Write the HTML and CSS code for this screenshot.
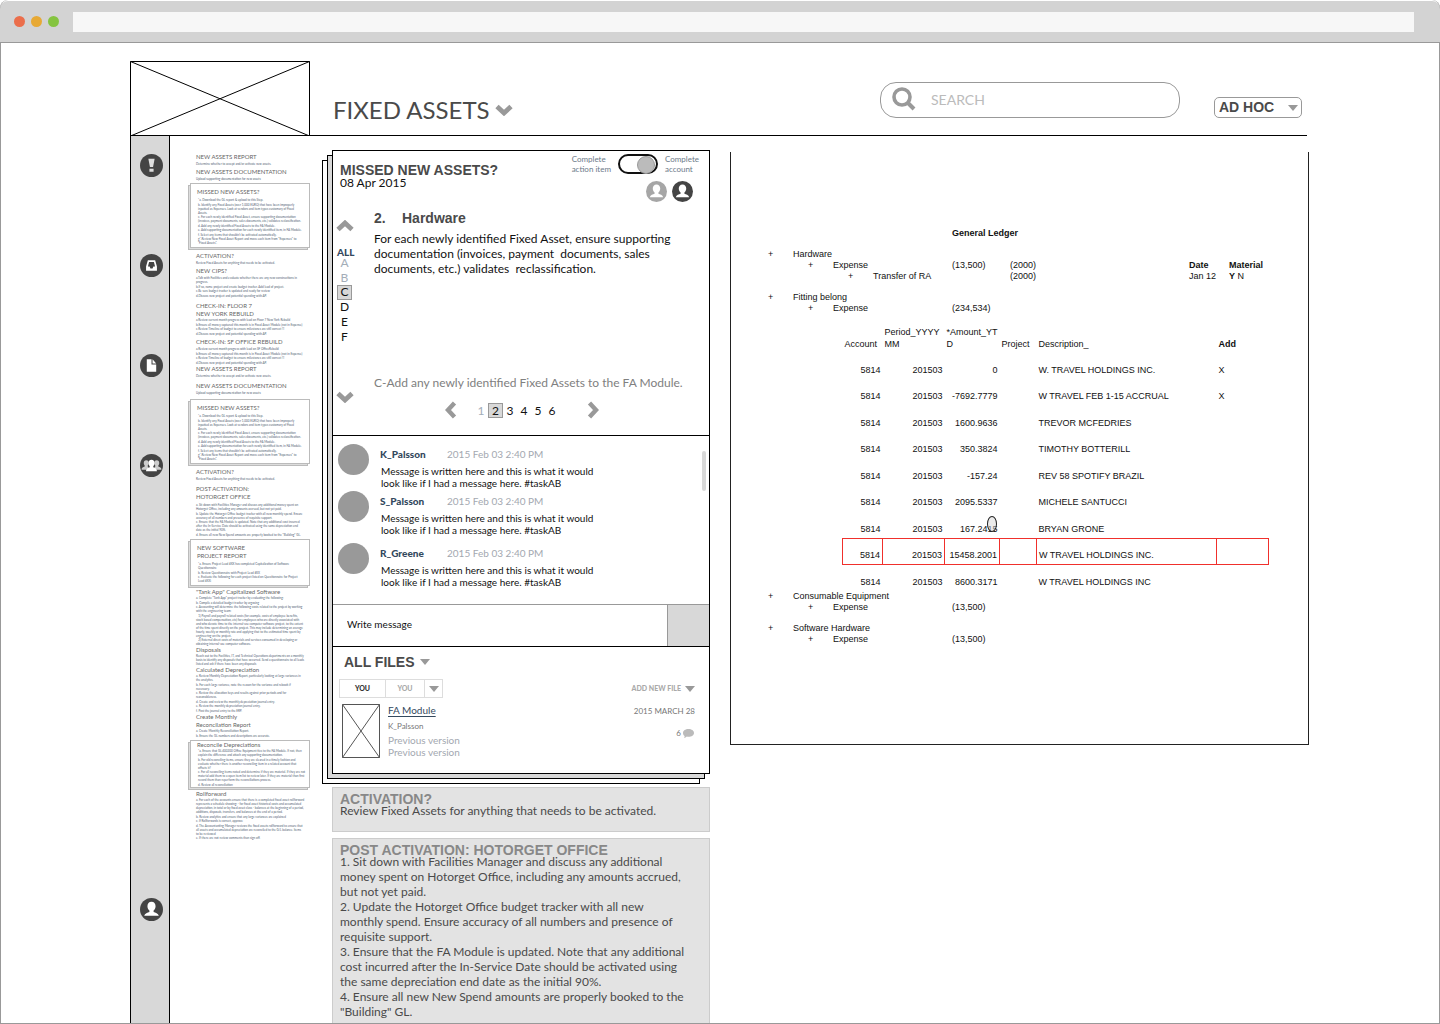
FILE: index.html
```html
<!DOCTYPE html>
<html lang="en">
<head>
<meta charset="utf-8">
<meta name="viewport" content="width=device-width, initial-scale=1">
<title>Fixed Assets</title>
<link rel="stylesheet" href="styles.css">
</head>
<body>
<svg class="sprite" aria-hidden="true">
  <symbol id="chevron" viewBox="0 0 18 12"><path d="M2 2.500l7 6.500 7-6.500" fill="none" stroke="#999" stroke-width="4.800"/></symbol>
  <symbol id="caret" viewBox="0 0 10 6"><path d="M0 0h10L5 6z" fill="#999"/></symbol>
  <symbol id="person" viewBox="0 0 22 22"><circle cx="11" cy="11" r="11" fill="currentColor"/><path d="M11 3.6c2.500 0 3.900 1.800 3.900 4.200 0 1.800-.8 3.300-1.900 4.200v1.400c1.700.7 4.400 1.200 5 3.600H4c.6-2.400 3.300-2.900 5-3.600V12c-1.100-.9-1.900-2.400-1.900-4.200 0-2.400 1.400-4.200 3.900-4.200z" fill="#fff"/></symbol>
</svg>
<div class="window">
  <div class="chrome">
    <span class="dot dot-red"></span><span class="dot dot-amber"></span><span class="dot dot-green"></span>
    <input class="address" type="text" aria-label="Address">
  </div>
  <div class="page">
    <header class="header">
      <svg class="logo" viewBox="0 0 180 75" preserveAspectRatio="none" role="img" aria-label="Logo"><path d="M.5.5h179v74.500H.5zM.5.5l179 74.500M179.500.5L.5 75" fill="none" stroke="#000"/></svg>
      <h1 class="page-title">FIXED ASSETS <button class="icon-button" aria-label="Choose account"><svg class="chevron"><use href="#chevron"/></svg></button></h1>
      <label class="search">
        <svg class="search-icon" viewBox="0 0 24 24" aria-hidden="true"><circle cx="10" cy="10" r="8" fill="none" stroke="#999" stroke-width="3.600"/><path d="M15.500 15.500l6.500 6.500" stroke="#999" stroke-width="4"/></svg>
        <input type="search" placeholder="SEARCH" aria-label="Search">
      </label>
      <div class="filter">
        <select aria-label="Filter"><option>AD HOC</option></select>
        <svg class="caret"><use href="#caret"/></svg>
      </div>
    </header>

    <div class="workspace">
      <nav class="rail" aria-label="Sections">
        <a href="#alerts" aria-label="Alerts"><svg viewBox="0 0 22 22"><circle cx="11" cy="11" r="11" fill="#444"/><path d="M8 4.500h6l-1.500 8h-3zM9 14h4v3H9z" fill="#ddd"/></svg></a>
        <a href="#inbox" aria-label="Inbox"><svg viewBox="0 0 22 22"><circle cx="11" cy="11" r="11" fill="#444"/><path fill-rule="evenodd" d="M7.500 6h7l1.700 6v4H5.800v-4zM8.700 7.700L7.600 12h1.600l.8 1.800h2l.8-1.800h1.600l-1.100-4.300z" fill="#fff"/></svg></a>
        <a href="#documents" aria-label="Documents"><svg viewBox="0 0 22 22"><circle cx="11" cy="11" r="11" fill="#444"/><path d="M6.500 5H11v5h4.500v7h-9zM12 5l3.500 4H12z" fill="#fff"/></svg></a>
        <a href="#team" aria-label="Team"><svg viewBox="0 0 22 22"><circle cx="11" cy="11" r="11" fill="#444"/><path d="M6 6c1.700 0 2.300 1.200 2.300 2.600 0 1-.4 1.900-.9 2.400v1l2 3H1.500c0-2 1.500-2.400 3-3v-1c-.5-.5-.9-1.400-.9-2.400C3.600 7.200 4.300 6 6 6zM16 6c-1.700 0-2.300 1.200-2.300 2.600 0 1 .4 1.900.9 2.400v1l-2 3h7.900c0-2-1.500-2.400-3-3v-1c.5-.5.9-1.400.9-2.400C18.400 7.200 17.700 6 16 6z" fill="#ccc"/><path d="M11 5.500c2 0 2.900 1.400 2.900 3.100 0 1.300-.5 2.300-1.200 3v1c1.300.7 3.500 1 3.500 4H5.800c0-3 2.200-3.300 3.500-4v-1c-.7-.7-1.200-1.700-1.200-3 0-1.700.9-3.100 2.900-3.100z" fill="#fff"/></svg></a>
        <a class="rail-profile" href="#profile" aria-label="Profile"><svg><use href="#person"/></svg></a>
      </nav>

      <aside class="outline">
        <section class="item"><h2>NEW ASSETS REPORT</h2><p>Determine whether to accept and/or activate new assets.</p></section>
        <section class="item"><h2>NEW ASSETS DOCUMENTATION</h2><p>Upload supporting documentation for new assets</p></section>
        <section class="item boxed">
          <h2>MISSED NEW ASSETS?</h2>
          <p>*a. Download the GL report &amp; upload to this Step.</p>
          <p>b. Identify any Fixed Assets (over 1,000 EURO) that have been improperly<br>inputted as Expenses. Look at vendors and item types customary of Fixed<br>Assets.</p>
          <p>c. For each newly identified Fixed Asset, ensure supporting documentation<br>(invoices, payment documents, sales documents, etc.) validates reclassification.</p>
          <p>d. Add any newly identified Fixed Assets to the FA Module.</p>
          <p>e. Add supporting documentation for each newly identified item, in FA Module.</p>
          <p>f. Select any items that shouldn't be activated automatically.</p>
          <p>g*.Review New Fixed Asset Report and move each item from "Expenses" to<br>"Fixed Assets".</p>
        </section>
        <section class="item space-4"><h2>ACTIVATION?</h2><p>Review Fixed Assets for anything that needs to be activated.</p></section>
        <section class="item">
          <h2>NEW CIPS?</h2>
          <p>a.Talk with Facilities and evaluate whether there are any new constructions in<br>progress.</p>
          <p>b.If so, name project and create budget tracker. Add lead of project.</p>
          <p>c.Be sure budget tracker is updated and ready for review</p>
          <p>d.Discuss new project and potential spending with AP.</p>
        </section>
        <section class="item tight space-4">
          <h2>CHECK-IN: FLOOR 7<br>NEW YORK REBUILD</h2>
          <p>a.Review current month progress with lead on Floor 7 New York Rebuild</p>
          <p>b.Ensure all money captured this month is in Fixed Asset Module (not in Expense)</p>
          <p>c.Review Timeline of budget to ensure milestones are still correct !!!</p>
          <p>d.Discuss new project and potential spending with AP.</p>
        </section>
        <section class="item">
          <h2>CHECK-IN: SF OFFICE REBUILD</h2>
          <p>a.Review current month progress with lead on SF OfficeRebuild</p>
          <p>b.Ensure all money captured this month is in Fixed Asset Module (not in Expense)</p>
          <p>c.Review Timeline of budget to ensure milestones are still correct !!!</p>
          <p>d.Discuss new project and potential spending with AP.</p>
        </section>
        <section class="item space-0"><h2>NEW ASSETS REPORT</h2><p>Determine whether to accept and/or activate new assets.</p></section>
        <section class="item space-4"><h2>NEW ASSETS DOCUMENTATION</h2><p>Upload supporting documentation for new assets</p></section>
        <section class="item boxed space-4">
          <h2>MISSED NEW ASSETS?</h2>
          <p>*a. Download the GL report &amp; upload to this Step.</p>
          <p>b. Identify any Fixed Assets (over 1,000 EURO) that have been improperly<br>inputted as Expenses. Look at vendors and item types customary of Fixed<br>Assets.</p>
          <p>c. For each newly identified Fixed Asset, ensure supporting documentation<br>(invoices, payment documents, sales documents, etc.) validates reclassification.</p>
          <p>d. Add any newly identified Fixed Assets to the FA Module.</p>
          <p>e. Add supporting documentation for each newly identified item, in FA Module.</p>
          <p>f. Select any items that shouldn't be activated automatically.</p>
          <p>g*.Review New Fixed Asset Report and move each item from "Expenses" to<br>"Fixed Assets".</p>
        </section>
        <section class="item space-4"><h2>ACTIVATION?</h2><p>Review Fixed Assets for anything that needs to be activated.</p></section>
        <section class="item loose space-4">
          <h2>POST ACTIVATION:<br>HOTORGET OFFICE</h2>
          <p>a. Sit down with Facilities Manager and discuss any additional money spent on<br>Hotorget Office, including any amounts accrued, but not yet paid.</p>
          <p>b. Update the Hotorget Office budget tracker with all new monthly spend. Ensure<br>accuracy of all numbers and presence of requisite support.</p>
          <p>c. Ensure that the FA Module is updated. Note that any additional cost incurred<br>after the In-Service Date should be activated using the same depreciation end<br>date as the initial 90%.</p>
          <p>d. Ensure all new New Spend amounts are properly booked to the "Building" GL.</p>
        </section>
        <section class="item boxed">
          <h2>NEW SOFTWARE<br>PROJECT REPORT</h2>
          <p>*a. Ensure Project Lead #XX has completed Capitalization of Software<br>Questionnaire</p>
          <p>b. Review Questionnaire with Project Lead #XX</p>
          <p>c. Evaluate the following for each project listed on Questionnaire for Project<br>Lead #XX:</p>
        </section>
        <section class="item tight">
          <h2>"Tank App" Capitalized Software</h2>
          <p>a. Complete "Tank App" project tracker by evaluating the following:</p>
          <p>b. Compile a detailed budget tracker by argosing</p>
          <p>c. Accounting will determine the following costs related to the project by working<br>with the engineering team:</p>
          <p>&emsp;1) Payroll and payroll-related costs (for example, costs of employee benefits,<br>stock based compensation, etc) for employees who are directly associated with<br>and who devote time to the internal-use computer software project, to the extent<br>of the time spent directly on the project. This may include determining an average<br>hourly, weekly or monthly rate and applying that to the estimated time spent by<br>engineering on the project.</p>
          <p>&emsp;2) External direct costs of materials and services consumed in developing or<br>obtaining internal-use computer software.</p>
        </section>
        <section class="item tight space-0">
          <h2>Disposals</h2>
          <p>Reach out to the Facilities, IT, and Technical Operations departments on a monthly<br>basis to identify any disposals that have occurred. Send a questionnaire to all leads<br>listed and ask if there have been any disposals</p>
        </section>
        <section class="item tight space-0">
          <h2>Calculated Depreciation</h2>
          <p>a. Review Monthly Depreciation Report, particularly looking at large variances in<br>the analytics.</p>
          <p>b. For each large variance, note the reason for the variance and rebook if<br>necessary.</p>
          <p>c. Review the allocation keys and results against prior periods and for<br>reasonableness.</p>
          <p>d. Create and review the monthly depreciation journal entry.</p>
          <p>e. Review the monthly depreciation journal entry.</p>
          <p>f. Post the journal entry to the ERP.</p>
        </section>
        <section class="item tight space-0">
          <h2>Create Monthly<br>Reconcilation Report</h2>
          <p>a. Create Monthly Reconciliation Report.</p>
          <p>b. Ensure the GL numbers and descriptions are accurate.</p>
        </section>
        <section class="item boxed compact">
          <h2>Reconcile Depreciations</h2>
          <p>*a. Ensure that GL 400200 Office Equipment ties to the FA Module. If not, then<br>explain the difference and attach any supporting documentation.</p>
          <p>b. For old reconciling items, ensure they are cleared in a timely fashion and<br>evaluate whether there is another reconciling item in a related account that<br>offsets it?</p>
          <p>c. For all reconciling items noted and determine if they are material. If they are not<br>material add them to a open item list to review later. If they are material than first<br>record them than reperform the reconciliations process.</p>
          <p>d. Review all reconciliation</p>
        </section>
        <section class="item tight">
          <h2>Rollforward</h2>
          <p>a. For each of the accounts ensure that there is a completed fixed asset rollforward<br>represents a schedule showing: - for fixed asset historical costs and accumulated<br>depreciation, in total or by fixed asset class - balances at the beginning of a period,<br>additions, disposals, transfers, and balances at the end of a period.</p>
          <p>b. Review analytics and ensure that any large variances are explained</p>
          <p>c. If Rollforwards is correct, approve</p>
          <p>d. The Accountanting Manager reviews the fixed assets rollforward to ensure that<br>all assets and accumulated depreciation are reconciled to the G/L balance. Items<br>to be reviewed</p>
          <p>e. If there are not review comments than sign off.</p>
        </section>
      </aside>

      <main class="tasks">
        <article class="card">
          <section class="task">
            <div class="task-head">
              <div class="task-name">
                <h2 class="heading">MISSED NEW ASSETS?</h2>
                <p>08 Apr 2015</p>
              </div>
              <div class="task-status">
                <label class="switch"><span>Complete<br>action item</span><input type="checkbox" role="switch" checked><span>Complete<br>account</span></label>
                <div class="people"><svg class="person-light"><use href="#person"/></svg><svg class="person-dark"><use href="#person"/></svg></div>
              </div>
            </div>
            <div class="task-body">
              <nav class="steps" aria-label="Steps">
                <button class="icon-button" aria-label="Previous step"><svg class="chevron flip"><use href="#chevron"/></svg></button>
                <a class="steps-all" href="#all">ALL</a>
                <div class="steps-list">
                  <a class="done" href="#a">A</a><a class="done" href="#b">B</a><a class="current" href="#c">C</a><a href="#d">D</a><a href="#e">E</a><a href="#f">F</a>
                </div>
                <button class="icon-button steps-down" aria-label="Next step"><svg class="chevron"><use href="#chevron"/></svg></button>
              </nav>
              <div class="step">
                <h3 class="heading step-title"><span>2.</span>Hardware</h3>
                <p class="step-text">For each newly identified Fixed Asset, ensure supporting<br>documentation (invoices, payment&nbsp; documents, sales<br>documents, etc.) validates&nbsp; reclassification.</p>
                <p class="step-next">C-Add any newly identified Fixed Assets to the FA Module.</p>
                <nav class="pager" aria-label="Pages">
                  <button class="icon-button" aria-label="Previous page"><svg class="side" viewBox="0 0 12 18"><path d="M9.500 2L3 9l6.500 7" fill="none" stroke="#999" stroke-width="4.400"/></svg></button>
                  <div class="pager-list"><a class="done" href="#p1">1</a><a class="current" href="#p2">2</a><a href="#p3">3</a><a href="#p4">4</a><a href="#p5">5</a><a href="#p6">6</a></div>
                  <button class="icon-button" aria-label="Next page"><svg class="side" viewBox="0 0 12 18"><path d="M2.500 2L9 9l-6.500 7" fill="none" stroke="#999" stroke-width="4.400"/></svg></button>
                </nav>
              </div>
            </div>
          </section>
          <section class="messages">
            <div class="message"><span class="avatar"></span><div><p class="byline"><b>K_Palsson</b><time>2015 Feb 03 2:40 PM</time></p><p class="text">Message is written here and this is what it would<br>look like if I had a message here. #taskAB</p></div></div>
            <div class="message"><span class="avatar"></span><div><p class="byline"><b>S_Palsson</b><time>2015 Feb 03 2:40 PM</time></p><p class="text">Message is written here and this is what it would<br>look like if I had a message here. #taskAB</p></div></div>
            <div class="message"><span class="avatar"></span><div><p class="byline"><b>R_Greene</b><time>2015 Feb 03 2:40 PM</time></p><p class="text">Message is written here and this is what it would<br>look like if I had a message here. #taskAB</p></div></div>
            <span class="scroll-thumb"></span>
          </section>
          <form class="composer">
            <input type="text" placeholder="Write message" aria-label="Write message">
            <button type="button" aria-label="Send"></button>
          </form>
          <section class="files">
            <h2 class="heading files-title">ALL FILES <svg class="caret"><use href="#caret"/></svg></h2>
            <div class="files-bar">
              <div class="tabs"><button class="selected">YOU</button><button>YOU</button><button aria-label="More"><svg class="caret"><use href="#caret"/></svg></button></div>
              <button class="add-file">ADD NEW FILE <svg class="caret"><use href="#caret"/></svg></button>
            </div>
            <div class="file">
              <svg class="thumb" viewBox="0 0 38 54"><path d="M.5.5h37v53H.5zM.5.5l37 53M37.500.5l-37 53" fill="none" stroke="#555"/></svg>
              <div class="file-info"><a class="file-name" href="#file">FA Module</a><small>K_Palsson</small><a href="#v2">Previous version</a><a href="#v1">Previous version</a></div>
              <div class="file-meta"><time>2015 MARCH 28</time><span>6 <svg class="bubble" viewBox="0 0 11 9"><path d="M5.500 0C8.600 0 11 1.700 11 3.900S8.600 7.800 5.500 7.800c-.6 0-1.200-.1-1.700-.2C3 8.500 2 9 1 9c.5-.7.7-1.400.6-2.100C.6 6.200 0 5.100 0 3.900 0 1.700 2.400 0 5.500 0z" fill="#bbb"/></svg></span></div>
            </div>
          </section>
        </article>
        <article class="queued queued-first">
          <h2 class="heading">ACTIVATION?</h2>
          <p>Review Fixed Assets for anything that needs to be activated.</p>
        </article>
        <article class="queued queued-last">
          <h2 class="heading">POST ACTIVATION: HOTORGET OFFICE</h2>
          <p>1. Sit down with Facilities Manager and discuss any additional<br>money spent on Hotorget Office, including any amounts accrued,<br>but not yet paid.</p>
          <p>2. Update the Hotorget Office budget tracker with all new<br>monthly spend. Ensure accuracy of all numbers and presence of<br>requisite support.</p>
          <p>3. Ensure that the FA Module is updated. Note that any additional<br>cost incurred after the In-Service Date should be activated using<br>the same depreciation end date as the initial 90%.</p>
          <p>4. Ensure all new New Spend amounts are properly booked to the<br>"Building" GL.</p>
        </article>
      </main>

      <section class="ledger">
        <table class="tree">
          <colgroup><col class="w25"><col class="w15"><col class="w25"><col class="w15"><col class="w25"><col class="w79"><col class="w58"><col class="w179"><col class="w40"><col class="w40"></colgroup>
          <tr><td colspan="6"></td><th colspan="4">General Ledger</th></tr>
          <tr class="blank"><td colspan="10"></td></tr>
          <tr><td>+</td><td colspan="9">Hardware</td></tr>
          <tr><td></td><td></td><td>+</td><td colspan="3">Expense</td><td>(13,500)</td><td>(2000)</td><th>Date</th><th>Material</th></tr>
          <tr><td colspan="4"></td><td>+</td><td>Transfer of RA</td><td></td><td>(2000)</td><td>Jan 12</td><td><b>Y</b> N</td></tr>
          <tr class="blank"><td colspan="10"></td></tr>
          <tr><td>+</td><td colspan="9">Fitting belong</td></tr>
          <tr><td></td><td></td><td>+</td><td colspan="3">Expense</td><td colspan="4">(234,534)</td></tr>
        </table>
        <table class="entries">
          <colgroup><col class="w40"><col class="w62"><col class="w55"><col class="w37"><col class="w180"><col class="w52"></colgroup>
          <thead><tr><th>Account</th><th>Period_YYYY<br>MM</th><th>*Amount_YT<br>D</th><th>Project</th><th>Description_</th><th class="strong">Add</th></tr></thead>
          <tbody>
            <tr><td>5814</td><td>201503</td><td>0</td><td></td><td>W. TRAVEL HOLDINGS INC.</td><td>X</td></tr>
            <tr><td>5814</td><td>201503</td><td>-7692.7779</td><td></td><td>W TRAVEL FEB 1-15 ACCRUAL</td><td>X</td></tr>
            <tr><td>5814</td><td>201503</td><td>1600.9636</td><td></td><td>TREVOR MCFEDRIES</td><td></td></tr>
            <tr><td>5814</td><td>201503</td><td>350.3824</td><td></td><td>TIMOTHY BOTTERILL</td><td></td></tr>
            <tr><td>5814</td><td>201503</td><td>-157.24</td><td></td><td>REV 58 SPOTIFY BRAZIL</td><td></td></tr>
            <tr><td>5814</td><td>201503</td><td>2095.5337</td><td></td><td>MICHELE SANTUCCI</td><td></td></tr>
            <tr><td>5814</td><td>201503</td><td class="pointed">167.2415<span class="pointer"></span></td><td></td><td>BRYAN GRONE</td><td></td></tr>
            <tr class="flagged"><td>5814</td><td>201503</td><td>15458.2001</td><td></td><td>W TRAVEL HOLDINGS INC.</td><td></td></tr>
            <tr><td>5814</td><td>201503</td><td>8600.3171</td><td></td><td>W TRAVEL HOLDINGS INC</td><td></td></tr>
          </tbody>
        </table>
        <table class="tree">
          <colgroup><col class="w25"><col class="w15"><col class="w25"><col class="w15"><col class="w25"><col class="w79"><col class="w58"><col class="w179"><col class="w40"><col class="w40"></colgroup>
          <tr><td>+</td><td colspan="9">Consumable Equipment</td></tr>
          <tr><td></td><td></td><td>+</td><td colspan="3">Expense</td><td colspan="4">(13,500)</td></tr>
          <tr class="blank"><td colspan="10"></td></tr>
          <tr><td>+</td><td colspan="9">Software Hardware</td></tr>
          <tr><td></td><td></td><td>+</td><td colspan="3">Expense</td><td colspan="4">(13,500)</td></tr>
        </table>
      </section>
    </div>
  </div>
</div>
</body>
</html>
```
FILE: styles.css
```css
* { box-sizing: border-box; }
body { margin: 0; background: #fff; color: #111; font: 12px/15px Lato, sans-serif; }
h1, h2, h3, p { margin: 0; font-weight: 400; }
a { color: inherit; text-decoration: none; }
button, input, select { margin: 0; padding: 0; border: 0; background: none; color: inherit; font: inherit; }
svg { display: block; }
.sprite { position: absolute; width: 0; height: 0; }

.window { display: flex; flex-direction: column; min-height: 100vh; border: 1px solid #999; border-top: 0; border-radius: 8px 8px 0 0; }
.chrome { display: flex; align-items: center; gap: 6px; height: 42px; margin: 1px -1px 0; padding: 0 26px 0 14px; background: #d3d3d3; border-bottom: 1px solid #999; border-radius: 8px 8px 0 0; }
.dot { width: 11px; height: 11px; border-radius: 50%; }
.dot-red { background: #eb6e4b; }
.dot-amber { background: #e7a935; }
.dot-green { background: #85c440; }
.address { flex: 1; height: 20px; margin-left: 8px; background: #f7f7f7; }

.page { flex: 1; display: flex; flex-direction: column; width: 100%; max-width: 1180px; margin: 0 auto; padding: 18px 1px 0 0; }
.header { display: flex; align-items: flex-start; height: 75px; margin-right: 2px; border-bottom: 1px solid #000; }
.logo { width: 180px; height: 75px; }
.page-title { display: flex; align-items: center; gap: 5px; margin: 34px auto 0 23px; color: #4a4a4a; font-size: 24px; line-height: 30px; }
.icon-button { display: block; cursor: pointer; }
.chevron { width: 18px; height: 12px; }
.flip { transform: rotate(180deg); }
.caret { width: 10px; height: 6px; }
.search { display: flex; align-items: center; gap: 15px; width: 300px; height: 36px; margin-top: 21px; padding: 0 12px 2px 11px; border: 1px solid #999; border-radius: 16px; font-size: 14px; }
.search-icon { width: 24px; height: 24px; }
.search input { flex: 1; min-width: 0; outline: 0; }
.search input::placeholder { color: #bbb; }
.filter { position: relative; width: 88px; margin: 36px 5px 0 34px; }
.filter select { width: 100%; height: 21px; padding-left: 4px; border: 1px solid #999; border-radius: 5px; appearance: none; color: #4a4a4a; font: bold 14px/19px "Liberation Sans", sans-serif; }
.filter .caret { position: absolute; right: 4px; top: 8px; }

.workspace { flex: 1; display: grid; grid-template-columns: 40px 162px minmax(0, 378fr) 20px minmax(0, 579fr); }
.rail { display: flex; flex-direction: column; align-items: center; gap: 77px; padding: 18px 0 102px 2px; background: #d8d8d8; border: solid #000; border-width: 0 1px; }
.rail svg { width: 23px; height: 23px; color: #444; }
.rail-profile { margin-top: auto; }

.outline { padding: 17px 22px 0 18px; white-space: nowrap; }
.item { margin-top: 2px; padding-left: 8px; color: #4f6072; font-size: 3px; line-height: 4px; }
.item:first-child { margin-top: 0; }
.item h2 { margin-bottom: 1px; color: #666; font-size: 6px; line-height: 8px; }
.item p:nth-of-type(odd):not(:last-child) { margin-bottom: 1px; }
.item.space-0 { margin-top: 0; }
.item.space-4 { margin-top: 4px; }
.item.tight h2 { margin-bottom: 0; }
.item.loose h2, .item.boxed h2 { margin-bottom: 2px; }
.boxed { margin-left: 2px; padding: 4px 0 2px 6px; border: 1px solid #bbb; background: #fff; box-shadow: -2px 2px 0 -1px #ddd, -2px 2px 0 0 #bbb; }
.boxed p { padding-left: 1px; }
.item.compact { padding-top: 0; padding-bottom: 0; }
.item.compact h2 { margin-bottom: 0; }

.tasks { display: flex; flex-direction: column; padding-top: 14px; }
.heading { color: #4a4a4a; font: bold 14px/16px "Liberation Sans", sans-serif; }
.card { border: 1px solid #000; background: #fff; box-shadow: -5px 5px 0 -1px #d8d8d8, -5px 5px 0 0 #000, -10px 10px 0 -1px #fff, -10px 10px 0 0 #000; }
.task-head { display: flex; justify-content: space-between; height: 51px; padding-left: 7px; }
.task-name { padding-top: 14px; }
.task-name .heading { line-height: 10px; }
.task-status { display: flex; flex-direction: column; gap: 7px; padding: 3px 10px 0 0; }
.switch { display: flex; align-items: center; gap: 7px; color: #6c7a89; font-size: 8px; line-height: 10px; }
.switch input { appearance: none; display: flex; justify-content: flex-end; width: 40px; height: 20px; padding: 1px; border: 2px solid #111; border-radius: 10px; }
.switch input::after { content: ""; width: 16px; height: 16px; margin-top: -1px; border: 1px solid #999; border-radius: 50%; background: #bbb; }
.people { display: flex; justify-content: flex-end; gap: 5px; padding-right: 6px; }
.people svg { width: 21px; height: 21px; }
.person-light { color: #a6a6a6; }
.person-dark { color: #444; }
.task-body { display: grid; grid-template-columns: 41px 1fr; padding-bottom: 17px; border-bottom: 1px solid #000; }
.steps { display: flex; flex-direction: column; align-items: flex-start; padding: 18px 0 15px 3px; }
.steps-all { margin: 17px 0 0 1px; color: #34495e; font-size: 10px; font-weight: 900; line-height: 6px; }
.steps-list { display: flex; flex-direction: column; margin-left: 1px; text-align: center; }
.steps-list a, .pager-list a { width: 15px; height: 15px; text-align: center; }
.steps-list a { line-height: 13px; }
.steps-list .done, .pager-list .done { color: #a3adb8; }
.steps-list .done { line-height: 16px; }
.steps-list .current, .pager-list .current { border: 1px solid #999; background: #d8d8d8; line-height: 13px; }
.steps-list .current { line-height: 11px; }
.steps-down { margin-top: auto; }
.step { padding-top: 8px; }
.step-title { display: flex; }
.step-title span { width: 28px; }
.step-text { margin-top: 5px; }
.step-next { margin-top: 99px; color: #808080; }
.pager { display: flex; align-items: center; margin: 12px 0 0 71px; }
.pager-list { display: flex; margin: 0 28px 0 17px; }
.pager-list a { width: 14px; }
.pager-list .current { width: 15px; }
.side { width: 12px; height: 18px; margin: -1px 0; }

.messages { position: relative; display: flex; flex-direction: column; gap: 2px; padding: 8px 5px 16px; font-size: 10px; line-height: 12px; }
.message { display: flex; gap: 11px; height: 45px; }
.message:nth-child(3) { margin-top: 5px; }
.avatar { width: 31px; height: 31px; border-radius: 50%; background: #999; }
.byline { display: flex; padding-top: 3px; line-height: 14px; }
.byline b { width: 67px; color: #34495e; font-weight: 900; }
.byline time { color: #a3a8b0; }
.text { padding: 4px 0 0 1px; }
.scroll-thumb { position: absolute; top: 15px; right: 3px; width: 4px; height: 40px; border-radius: 2px; background: #d8d8d8; }
.composer { display: flex; height: 42px; border-top: 1px solid #999; }
.composer input { flex: 1; min-width: 0; padding: 0 0 2px 14px; border-right: 1px solid #999; font-size: 10px; outline: 0; }
.composer input::placeholder { color: #111; }
.composer button { width: 41px; background: #d8d8d8; }

.files { padding: 7px 14px 15px 6px; border-top: 1px solid #000; }
.files-title { display: flex; align-items: center; gap: 5px; padding-left: 5px; }
.files-bar { display: flex; justify-content: space-between; margin: 9px 0 6px; color: #aaa; font-size: 7px; font-weight: 900; line-height: 17px; }
.tabs { display: flex; border: 1px solid #ddd; }
.tabs button { width: 39px; }
.tabs button + button { border-left: 1px solid #ddd; }
.tabs .selected { width: 45px; color: #333; }
.tabs button:last-child { display: flex; align-items: center; justify-content: center; width: 18px; }
.add-file { display: flex; align-items: center; gap: 4px; }
.file { display: flex; padding-left: 3px; }
.thumb { width: 38px; height: 54px; }
.file-info { display: flex; flex-direction: column; margin: 0 auto 0 8px; color: #a3a8b0; font-size: 10px; line-height: 12px; }
.file-name { margin-bottom: 4px; color: #34495e; text-decoration: underline; text-underline-offset: 2px; }
.file-info small { margin-bottom: 2px; color: #777; font-size: 8px; }
.file-meta { display: flex; flex-direction: column; align-items: flex-end; gap: 10px; padding-top: 1px; color: #777; font-size: 8px; line-height: 12px; }
.file-meta span { display: flex; align-items: center; gap: 2px; padding-right: 1px; }
.bubble { width: 11px; height: 9px; }

.queued { padding: 8px 7px 0; border: 1px solid #ccc; background: #e3e3e3; color: #4a4a4a; }
.queued .heading { color: #888; line-height: 7px; }
.queued-first { margin: 13px 0 6px; padding-bottom: 13px; }
.queued-last { flex: 1; border-bottom: 0; }

.ledger { grid-column: 5; align-self: start; margin-top: 16px; padding: 76px 40px 99px 37px; border: 1px solid #222; border-top: 0; font: 9px/11px "Liberation Sans", sans-serif; }
.ledger table { table-layout: fixed; width: 1px; border-collapse: collapse; }
.ledger td, .ledger th { padding: 0; text-align: left; white-space: nowrap; }
.tree tr { height: 11px; }
.tree .blank { height: 10px; }
.w15 { width: 15px; }
.w25 { width: 25px; }
.w37 { width: 37px; }
.w40 { width: 40px; }
.w52 { width: 52px; }
.w55 { width: 55px; }
.w58 { width: 58px; }
.w62 { width: 62px; }
.w79 { width: 79px; }
.w179 { width: 179px; }
.w180 { width: 180px; }
.entries { margin-left: 74px; }
.entries th { height: 38px; padding: 0 0 2px 2px; font-weight: 400; line-height: 12px; vertical-align: bottom; }
.entries .strong { font-weight: 700; }
.entries tbody td { height: 26px; padding: 0 2px 3px; vertical-align: bottom; }
.entries tbody tr:nth-child(odd) td { height: 27px; }
.entries tbody td:nth-child(-n+3) { text-align: right; }
.flagged td { border: 1px solid #f0302c; }
.pointed { position: relative; }
.pointer { position: absolute; right: 3px; top: 5px; width: 10px; height: 16px; border: 1px solid #222; border-radius: 50%; background: rgba(216, 216, 216, .5); }
```
